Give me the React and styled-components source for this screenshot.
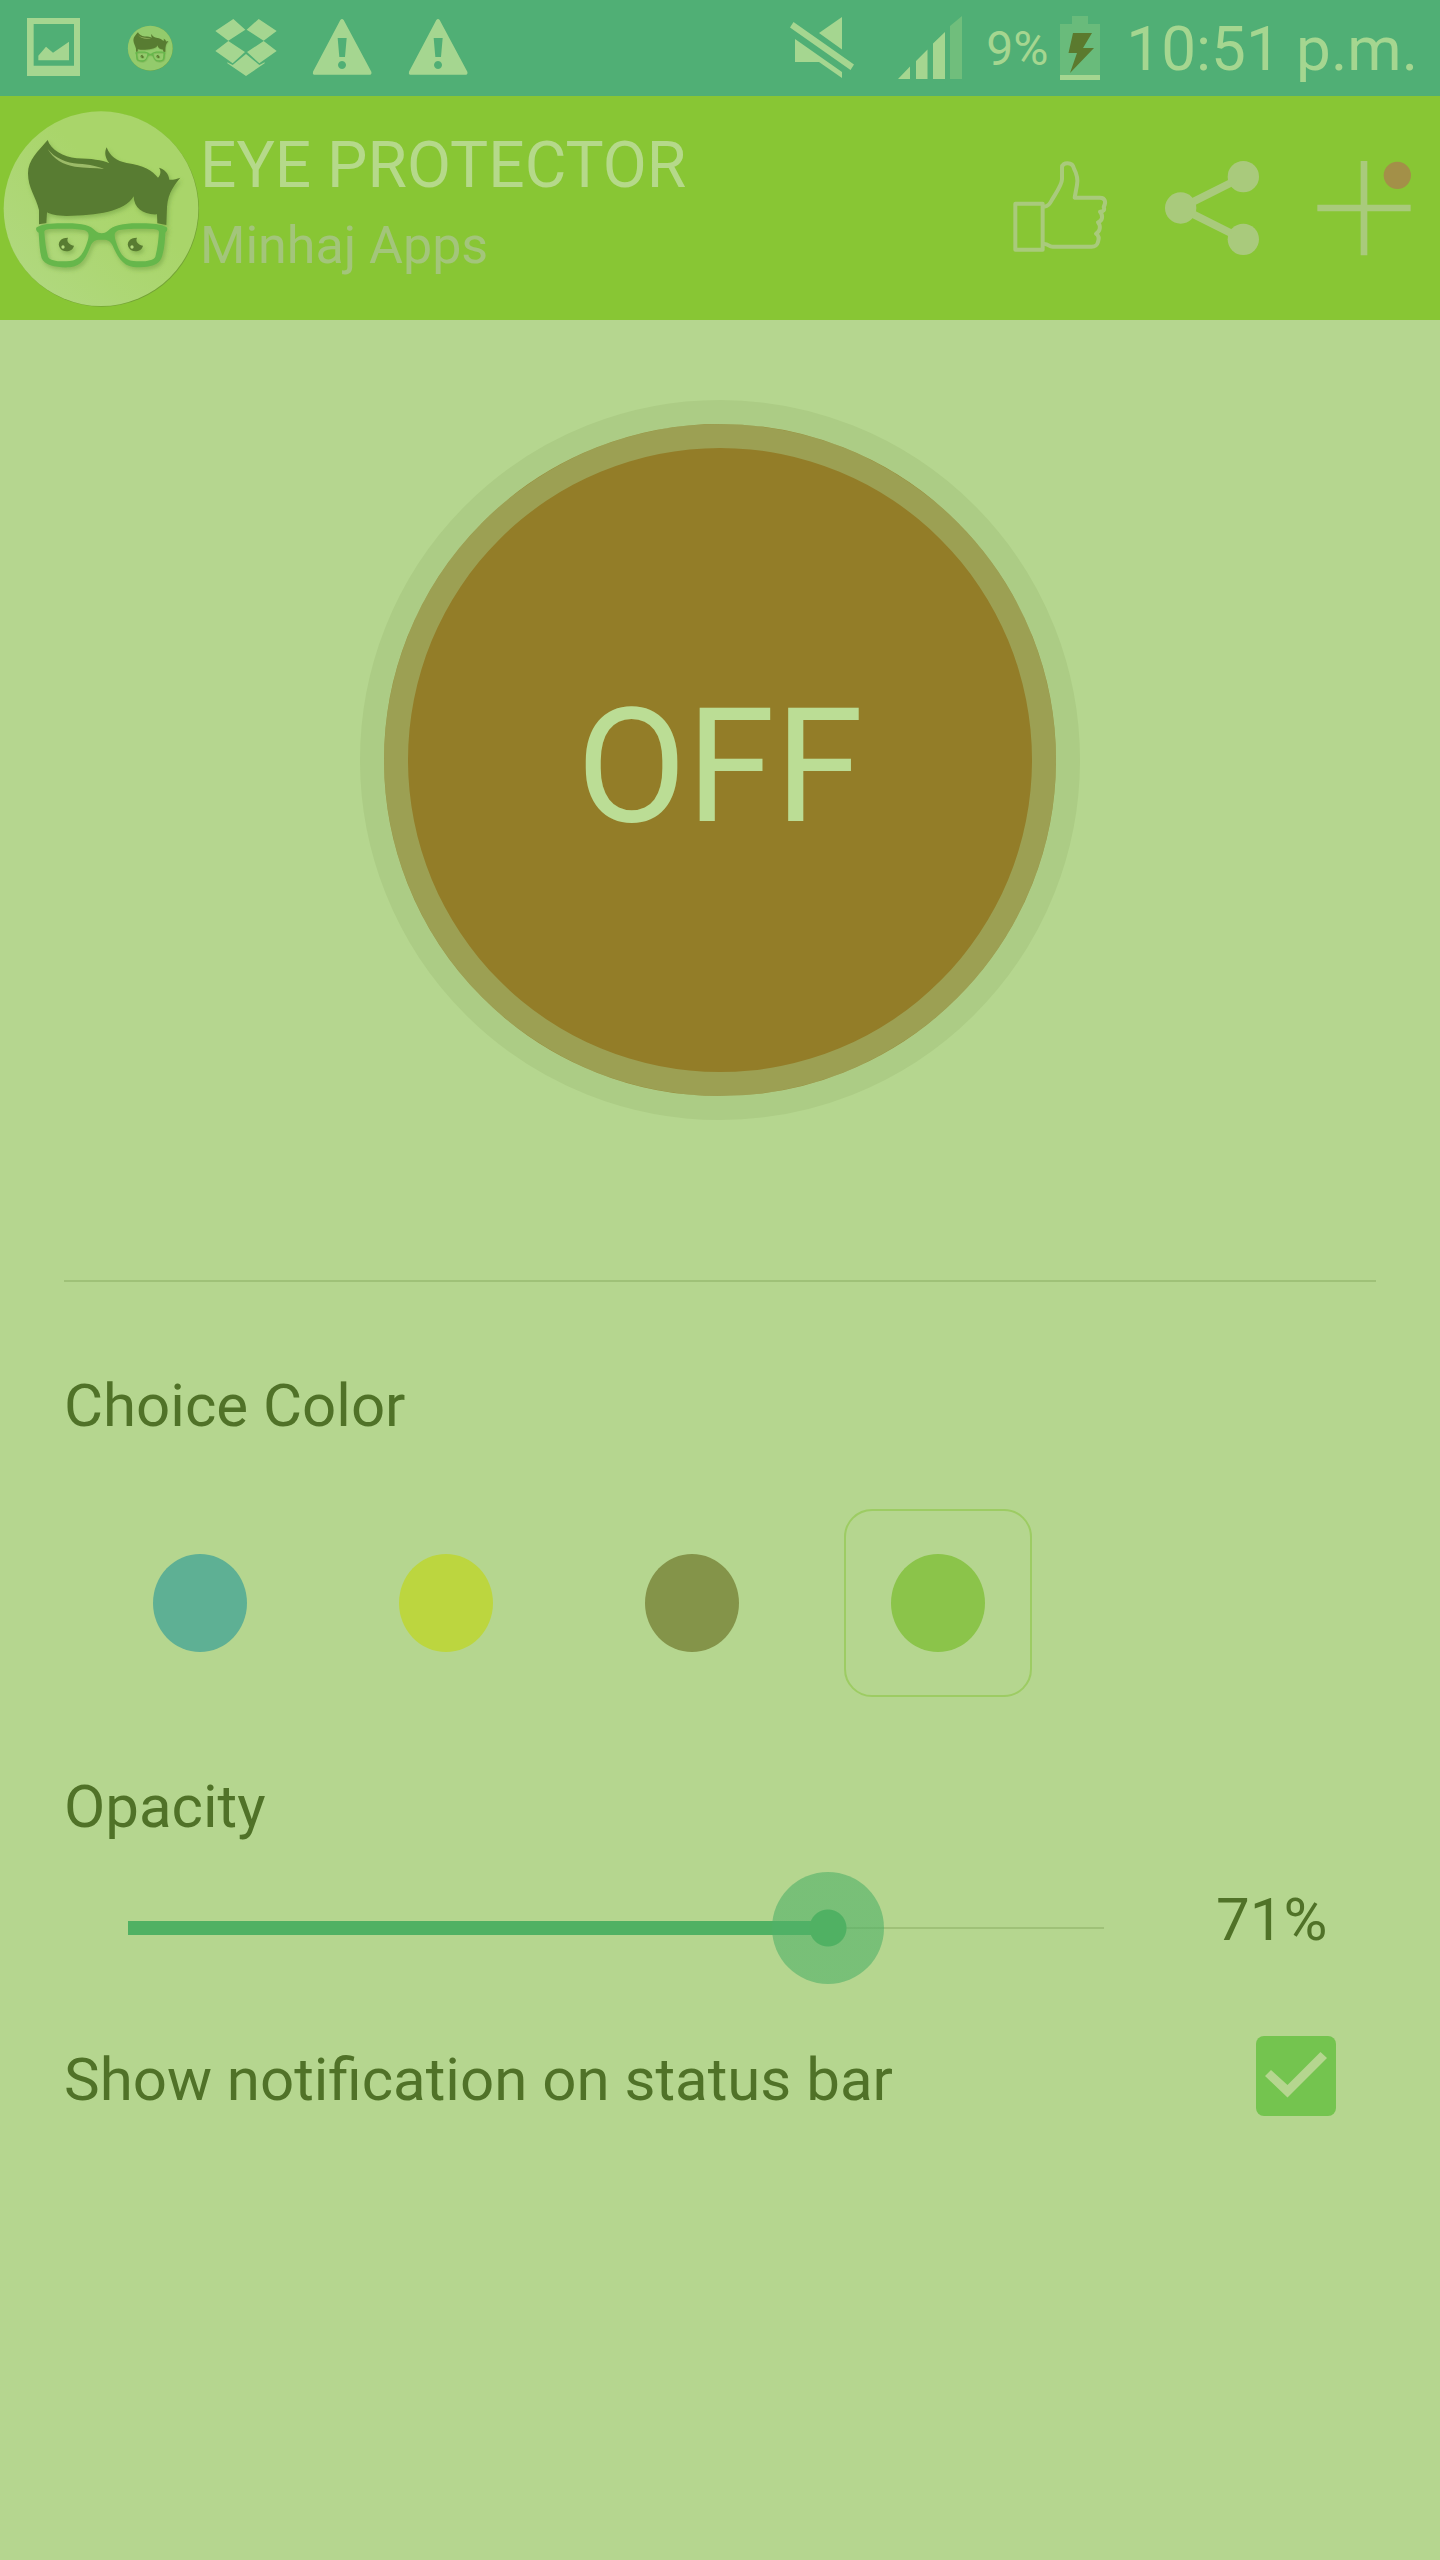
import { useState } from "react";
import styled, { createGlobalStyle } from "styled-components";

const MAX_ALPHA = 255;

const swatches = [
  { name: "Blue", color: "#5eb094" },
  { name: "Yellow", color: "#bcd63f" },
  { name: "Brown", color: "#849449" },
  { name: "Green", color: "#8bc44a" },
];

function App() {
  const [active, setActive] = useState(false);
  const [color, setColor] = useState("Green");
  const [alpha, setAlpha] = useState(183);
  const [notify, setNotify] = useState(true);

  const ratio = alpha / MAX_ALPHA;

  return (
    <AppContainer>
      <GlobalStyle />
      <StatusBar>
        <StatusGroup>
          <PictureIcon />
          <SmallAvatar>
            <Avatar id="small" from="#93cb6c" to="#93cb6c" />
          </SmallAvatar>
          <DropboxIcon />
          <WarningIcon />
          <WarningIcon />
        </StatusGroup>
        <StatusInfo>
          <MuteIcon />
          <SignalIcon />
          <Battery>
            <BatteryLevel>9%</BatteryLevel>
            <BatteryIcon />
          </Battery>
          <Clock>10:51 p.m.</Clock>
        </StatusInfo>
      </StatusBar>

      <Header>
        <HeaderAvatar>
          <Avatar id="header" from="#b2d983" to="#a9d56a" />
        </HeaderAvatar>
        <Titles>
          <Title>EYE PROTECTOR</Title>
          <Subtitle>Minhaj Apps</Subtitle>
        </Titles>
        <Actions>
          <IconButton aria-label="Like">
            <LikeIcon />
          </IconButton>
          <IconButton aria-label="Share">
            <ShareIcon />
          </IconButton>
          <IconButton aria-label="More apps">
            <PlusIcon />
          </IconButton>
        </Actions>
      </Header>

      <Content>
        <ToggleRow>
          <ToggleButton onClick={() => setActive(!active)}>
            {active ? "ON" : "OFF"}
          </ToggleButton>
        </ToggleRow>

        <Divider />

        <Label as="h2">Choice Color</Label>
        <SwatchRow>
          {swatches.map((swatch) => (
            <Swatch key={swatch.name}>
              <SwatchInput
                type="radio"
                name="color"
                aria-label={swatch.name}
                $color={swatch.color}
                checked={color === swatch.name}
                onChange={() => setColor(swatch.name)}
              />
            </Swatch>
          ))}
        </SwatchRow>

        <Label htmlFor="opacity">Opacity</Label>
        <SliderRow>
          <Slider
            id="opacity"
            type="range"
            min="0"
            max={MAX_ALPHA}
            value={alpha}
            onChange={(e) => setAlpha(Number(e.target.value))}
            style={{ "--ratio": ratio }}
          />
          <SliderValue htmlFor="opacity">{Math.floor(ratio * 100)}%</SliderValue>
        </SliderRow>

        <NotifyRow>
          <Label htmlFor="notify">Show notification on status bar</Label>
          <CheckBox>
            <CheckInput
              id="notify"
              type="checkbox"
              checked={notify}
              onChange={() => setNotify(!notify)}
            />
            {notify && (
              <CheckMark viewBox="0 0 80 80">
                <path d="M9 40 31.5 61.5 71 22 64.5 16 31.5 49 15 34z" />
              </CheckMark>
            )}
          </CheckBox>
        </NotifyRow>
      </Content>
    </AppContainer>
  );
}

export default App;

function Avatar({ id, from, to }) {
  return (
    <svg viewBox="0 39 600 600" width="100%" height="100%">
      <defs>
        <linearGradient id={`face-${id}`} x1="0" y1="1" x2="0.6" y2="0.4">
          <stop offset="0" stopColor={from} />
          <stop offset="1" stopColor={to} />
        </linearGradient>
        <filter id={`shade-${id}`} x="-10%" y="-10%" width="125%" height="140%">
          <feDropShadow
            dx="5"
            dy="8"
            stdDeviation="6"
            floodColor="#5f8f35"
            floodOpacity="0.45"
          />
        </filter>
      </defs>
      <circle cx="305" cy="343" r="292" fill="#74a336" />
      <circle cx="303" cy="341" r="292" fill={`url(#face-${id})`} />
      <g filter={`url(#shade-${id})`}>
        <path
          fill="#597b30"
          d="M117 388V345C108 305 84 280 84 235C84 195 115 168 143 135C152 165 190 185 230 190C275 191 305 195 328 205C316 190 312 172 320 157C330 185 350 198 380 204C430 210 458 228 474 248C482 240 484 228 477 218C495 223 506 236 508 254C518 255 530 252 541 248C525 268 505 290 501 335L499 390 472 385 471 358C430 360 402 340 401 304C375 350 290 362 200 363C170 362 150 358 141 352L139 384z"
        />
        <path
          fill="#9bbb68"
          d="M143 162C165 190 200 204 235 206C270 208 295 214 312 222C285 218 255 219 225 215C190 210 160 192 143 162z"
        />
      </g>
      <g filter={`url(#shade-${id})`}>
        <path
          fill="#66b74b"
          fillRule="evenodd"
          d="M110 397C130 386 160 384 200 385C250 385 270 391 287 408C298 417 312 417 323 408C340 391 370 385 410 385C450 384 480 386 500 397C504 402 501 409 496 413C495 440 492 470 484 490C474 514 440 519 400 516C366 512 350 480 337 450C328 434 320 434 305 434C290 434 282 434 273 450C260 485 245 514 210 517C170 519 135 512 125 490C118 465 118 440 116 413C109 409 106 402 110 397zM133 412C133 405 140 402 155 402C190 400 230 401 250 405C268 409 268 420 263 437C253 470 240 495 210 498C180 501 150 498 144 485C137 460 135 435 133 412zM477 412C477 405 470 402 455 402C420 400 380 401 360 405C342 409 342 420 347 437C357 470 370 495 400 498C430 501 460 498 466 485C473 460 475 435 477 412z"
        />
        {[0, 207].map((x) => (
          <g key={x} transform={`translate(${x} 0)`}>
            <path
              fill="#597b30"
              d="M204 428C197 442 212 450 222 452C217 473 189 473 180 459C170 443 182 428 204 428z"
            />
            <circle cx="189" cy="456" r="5" fill="#b5dc80" />
          </g>
        ))}
      </g>
    </svg>
  );
}

function PictureIcon() {
  return (
    <StatusIcon viewBox="66 48 192 192">
      <path
        fillRule="evenodd"
        d="M81 54H240V228H81zM101 72V197H222V72zM115 181V167L138 140 159 158 207 125V181z"
      />
    </StatusIcon>
  );
}

function DropboxIcon() {
  return (
    <StatusIcon viewBox="642 48 192 192">
      <path d="M700 57 736 89 685 122 646 93zM776 57 830 93 791 122 740 89zM685 123 735 156 698 190 646 153zM791 123 830 153 778 190 741 156zM738 162 778 195 794 187V190L738 228 682 190V187L698 195z" />
    </StatusIcon>
  );
}

function WarningIcon() {
  return (
    <StatusIcon viewBox="930 48 192 192">
      <path
        fillRule="evenodd"
        d="M1021 60Q1026 54 1031 60L1114 215Q1116 223 1110 224H942Q937 223 939 215zM1013 114 1018 171H1035L1040 114zM1026 183A12 12 0 1 0 1026.1 183z"
      />
    </StatusIcon>
  );
}

function MuteIcon() {
  return (
    <StatusIcon viewBox="0 0 64 64">
      <path d="M29 17 52 1V33.5zM5 23 52 56V62L29 46H5zM0 11.5 3.5 6 64 48.5 60.5 54z" />
    </StatusIcon>
  );
}

function SignalIcon() {
  return (
    <StatusIcon viewBox="0 0 64 64">
      <path d="M0 63 12 50.5V63zM18 45 29.5 33.5V63H18zM35 27.5 47 16V63H35z" />
      <path fill="#70be7c" d="M52 10 64 0V63H52z" />
    </StatusIcon>
  );
}

function BatteryIcon() {
  return (
    <svg viewBox="0 0 40 64" width="40" height="64">
      <path fill="#69bb7b" d="M12 0H28V8H40V59H0V8H12z" />
      <path fill="#a5d690" d="M0 59H40V64H0z" />
      <path fill="#5b7a2e" d="M13 17H32L23 32H34L10 57 17 37H8.5z" />
    </svg>
  );
}

function LikeIcon() {
  return (
    <svg viewBox="96 90 288 288" width="96" height="96">
      <g fill="none" stroke="#a9ca7c" strokeWidth="12" strokeLinejoin="round">
        <path d="M106 221H188V359H106z" />
        <path d="M192 230C205 228 209 222 215 211C225 194 246 165 246 148V112C246 96 278 94 282 116C292 135 294 150 291 165L284 203H360C376 203 379 217 371 231C375 240 370 245 360 245C371 258 367 272 354 277C363 288 361 304 348 311C358 318 357 328 354 336C351 347 347 350 335 350H218C205 350 206 341 192 342" />
      </g>
    </svg>
  );
}

function ShareIcon() {
  return (
    <svg viewBox="552 90 288 288" width="96" height="96">
      <path
        d="M790 140 602 234 790 328"
        fill="none"
        stroke="#a9ca7c"
        strokeWidth="23"
      />
      <g fill="#a9ca7c">
        <circle cx="790" cy="140" r="47" />
        <circle cx="602" cy="234" r="47" />
        <circle cx="790" cy="328" r="47" />
      </g>
    </svg>
  );
}

function PlusIcon() {
  return (
    <svg viewBox="1008 90 288 288" width="96" height="96">
      <path d="M1152 93V376M1012 234H1292" stroke="#a9ca7c" strokeWidth="20" />
      <circle cx="1252" cy="136" r="41" fill="#a39048" />
    </svg>
  );
}

const GlobalStyle = createGlobalStyle`
  * {
    box-sizing: border-box;
  }

  body {
    margin: 0;
    background-color: #b5d68f;
    font-family: Roboto, sans-serif;
  }

  svg {
    display: block;
  }
`;

const AppContainer = styled.div`
  min-height: 100vh;
  background-color: #b5d68f;
`;

const StatusBar = styled.div`
  height: 96px;
  padding: 0 22px;
  display: flex;
  align-items: center;
  justify-content: space-between;
  background-color: #50af75;
  color: #a5d690;
`;

const StatusGroup = styled.div`
  display: flex;
  align-items: center;
  gap: 32px;
`;

const StatusInfo = styled.div`
  display: flex;
  align-items: center;
`;

const StatusIcon = styled.svg`
  width: 64px;
  height: 64px;
  fill: #a5d690;

  ${StatusInfo} & {
    margin-right: 44px;
  }

  ${StatusInfo} & + & {
    margin-right: 24px;
  }
`;

const SmallAvatar = styled.div`
  width: 64px;
  padding: 9px;
`;

const Battery = styled.div`
  display: flex;
  align-items: center;
  gap: 12px;
  margin-right: 26px;
`;

const BatteryLevel = styled.span`
  font-size: 48px;
`;

const Clock = styled.time`
  font-size: 62px;
`;

const Header = styled.header`
  height: 224px;
  padding-right: 28px;
  display: flex;
  align-items: center;
  background-color: #88c634;
`;

const HeaderAvatar = styled.div`
  width: 200px;
  height: 200px;
`;

const Titles = styled.div`
  flex: 1;
  padding-bottom: 12px;
`;

const Title = styled.h1`
  margin: 0 0 12px;
  font-size: 64px;
  line-height: 76px;
  font-weight: 400;
  color: #b5d98a;
`;

const Subtitle = styled.p`
  margin: 0;
  font-size: 52px;
  line-height: 60px;
  color: #a3c57b;
`;

const Actions = styled.div`
  display: flex;
  gap: 56px;
`;

const IconButton = styled.button`
  padding: 0;
  border: none;
  background: none;
  cursor: pointer;
`;

const Content = styled.main`
  padding: 80px 64px;
`;

const ToggleRow = styled.div`
  display: flex;
  justify-content: center;
`;

const ToggleButton = styled.button`
  width: 720px;
  height: 720px;
  padding: 12px 0 0;
  border: 24px solid #accc85;
  border-radius: 50%;
  background-color: #937d28;
  box-shadow: inset 0 0 0 24px #9ca053;
  color: #bbdd95;
  font-family: inherit;
  font-size: 160px;
  cursor: pointer;
`;

const Divider = styled.hr`
  height: 2px;
  margin: 160px 0 88px;
  border: none;
  background-color: #9fc178;
`;

const Label = styled.label`
  display: block;
  margin: 0;
  font-size: 60px;
  line-height: 72px;
  font-weight: 400;
  color: #507228;
`;

const SwatchRow = styled.div`
  display: flex;
  gap: 58px;
  margin: 67px 42px 74px;
`;

const Swatch = styled.label`
  width: 188px;
  height: 188px;
  display: flex;
  align-items: center;
  justify-content: center;
  border: 2px solid transparent;
  border-radius: 28px;

  &:has(input:checked) {
    border-color: #9dcc63;
  }
`;

const SwatchInput = styled.input`
  appearance: none;
  width: 94px;
  height: 98px;
  margin: 0;
  border-radius: 50%;
  background-color: ${(props) => props.$color};
`;

const SliderRow = styled.div`
  display: flex;
  align-items: flex-start;
  gap: 56px;
  margin: 29px 0 52px 8px;
`;

const Slider = styled.input`
  appearance: none;
  flex: 1;
  min-width: 0;
  height: 112px;
  margin: 0;
  background-color: transparent;
  background-image: linear-gradient(#50b163, #50b163),
    linear-gradient(#9fc178, #9fc178);
  background-repeat: no-repeat;
  background-position: 56px center;
  background-size: calc((100% - 112px) * var(--ratio)) 14px,
    calc(100% - 112px) 2px;

  &::-webkit-slider-thumb {
    appearance: none;
    width: 112px;
    height: 112px;
    border-radius: 50%;
    background: radial-gradient(
      circle,
      #50b163 18px,
      rgba(80, 177, 104, 0.6) 19px
    );
  }
`;

const SliderValue = styled.output`
  width: 160px;
  font-size: 60px;
  line-height: 96px;
  color: #507228;
`;

const NotifyRow = styled.div`
  display: flex;
  align-items: flex-end;
  justify-content: space-between;
  padding-right: 40px;
`;

const CheckBox = styled.div`
  display: grid;
`;

const CheckInput = styled.input`
  appearance: none;
  grid-area: 1 / 1;
  width: 80px;
  height: 80px;
  margin: 0;
  border-radius: 8px;
  background-color: #74c44f;
`;

const CheckMark = styled.svg`
  grid-area: 1 / 1;
  width: 80px;
  height: 80px;
  fill: #b5d68f;
  pointer-events: none;
`;
